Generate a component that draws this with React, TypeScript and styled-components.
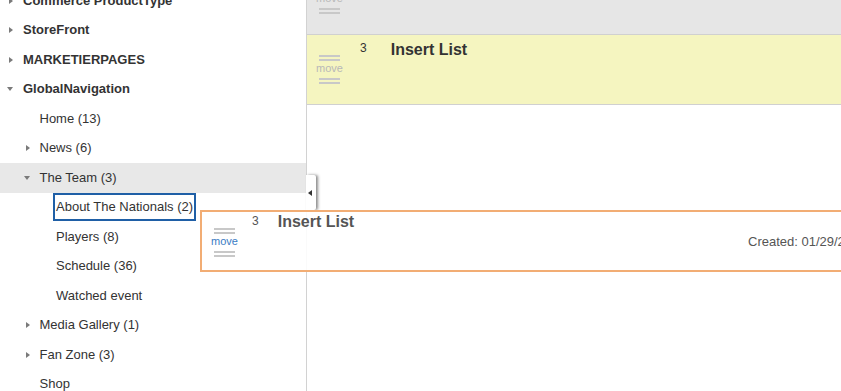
import styled, { createGlobalStyle } from 'styled-components'

const GlobalStyle = createGlobalStyle`
  html, body {
    margin: 0;
    padding: 0;
    background: #fff;
    overflow: hidden;
  }
  body {
    font-family: "Liberation Sans", Arial, sans-serif;
    color: #333;
  }
`

const Page = styled.div`
  position: relative;
  width: 841px;
  height: 391px;
  display: flex;
  overflow: hidden;
`

const Sidebar = styled.div`
  width: 306px;
  flex: none;
  border-right: 1px solid #d2d2d2;
  overflow: hidden;
`

const Tree = styled.ul`
  list-style: none;
  margin: -14px 0 0;
  padding: 0;
`

const Node = styled.li<{ $level: number; $active?: boolean; $bold?: boolean }>`
  height: 29.5px;
  display: flex;
  align-items: center;
  padding-left: ${p => 5 + (p.$level - 1) * 16.5}px;
  background: ${p => (p.$active ? '#e8e8e8' : 'transparent')};
  font-size: 13px;
  font-weight: ${p => (p.$bold ? 700 : 400)};
  color: #333;
  white-space: nowrap;
`

const Toggle = styled.span<{ $open?: boolean; $empty?: boolean }>`
  width: 18px;
  flex: none;
  display: flex;
  align-items: center;
  justify-content: flex-start;
  padding-left: 2px;
  box-sizing: border-box;

  &::before {
    content: '';
    display: ${p => (p.$empty ? 'none' : 'block')};
    width: 0;
    height: 0;
    ${p =>
      p.$open
        ? `border-left: 3.5px solid transparent;
           border-right: 3.5px solid transparent;
           border-top: 4px solid #7a7a7a;
           margin-left: 0;`
        : `border-top: 3.5px solid transparent;
           border-bottom: 3.5px solid transparent;
           border-left: 4px solid #7a7a7a;
           margin-left: 2px;`}
  }
`

const Label = styled.span<{ $selected?: boolean }>`
  line-height: 24px;
  padding: 0 1px;
  margin-left: -3px;
  border: 2px solid ${p => (p.$selected ? '#1f5fa6' : 'transparent')};
`

const Main = styled.div`
  flex: 1;
  min-width: 0;
  overflow: hidden;
`

const ItemList = styled.div`
  margin-top: -35px;
`

const Item = styled.div<{ $tone: 'gray' | 'yellow' }>`
  height: 69px;
  display: flex;
  align-items: flex-start;
  padding-left: 12px;
  background: ${p => (p.$tone === 'yellow' ? '#f5f5c0' : '#e6e6e6')};
  border-bottom: 1px solid #d0d0d0;
`

const Handle = styled.div<{ $top: number; $link?: boolean }>`
  width: 21px;
  flex: none;
  margin-top: ${p => p.$top}px;
  display: flex;
  flex-direction: column;
  align-items: center;
  color: ${p => (p.$link ? '#3a7cc4' : '#b8b8b8')};
  font-size: 11px;
`

const Bars = styled.div`
  width: 21px;
  display: flex;
  flex-direction: column;
  gap: 2px;

  & > i {
    display: block;
    height: 2px;
    background: #c8c8c8;
  }
`

const MoveText = styled.span`
  line-height: 15px;
  margin: 0 0 2px;
`

const Num = styled.span<{ $gap: number; $top: number }>`
  margin-left: ${p => p.$gap}px;
  margin-top: ${p => p.$top}px;
  font-size: 12px;
  line-height: 14px;
  color: #333;
`

const Title = styled.span<{ $gap: number; $top: number }>`
  margin-left: ${p => p.$gap}px;
  margin-top: ${p => p.$top}px;
  font-size: 16px;
  line-height: 20px;
  font-weight: 700;
  color: #333;
`

const DragCard = styled.div`
  position: absolute;
  left: 200px;
  top: 210px;
  width: 760px;
  height: 58px;
  display: flex;
  align-items: flex-start;
  padding-left: 12px;
  background: rgba(255, 255, 255, 0.88);
  border: 2px solid #f2ad74;
  z-index: 3;
`

const CardBody = styled.div`
  display: flex;
  flex-direction: column;
  flex: 1;
`

const CardHead = styled.div`
  display: flex;
  align-items: flex-start;

  & > ${Title} {
    color: #555;
  }
  & > ${Num} {
    color: #555;
  }
`

const Meta = styled.div`
  margin: 2px 0 0 513px;
  font-size: 13px;
  line-height: 15px;
  color: #555;
  white-space: nowrap;
`

const CollapseTab = styled.div`
  position: absolute;
  left: 306px;
  top: 175px;
  width: 10px;
  height: 35px;
  background: #fff;
  border-radius: 0 2px 2px 0;
  box-shadow: 2px 0 3px rgba(0, 0, 0, 0.45);
  display: flex;
  align-items: center;
  justify-content: center;
  z-index: 2;

  &::before {
    content: '';
    display: block;
    border-top: 3.5px solid transparent;
    border-bottom: 3.5px solid transparent;
    border-right: 4px solid #333;
    margin-left: -2px;
  }
`

type TreeNode = {
  label: string
  level: number
  toggle?: 'open' | 'closed'
  bold?: boolean
  active?: boolean
  selected?: boolean
}

const nodes: TreeNode[] = [
  { label: 'Commerce ProductType', level: 1, toggle: 'closed', bold: true },
  { label: 'StoreFront', level: 1, toggle: 'closed', bold: true },
  { label: 'MARKETIERPAGES', level: 1, toggle: 'closed', bold: true },
  { label: 'GlobalNavigation', level: 1, toggle: 'open', bold: true },
  { label: 'Home (13)', level: 2 },
  { label: 'News (6)', level: 2, toggle: 'closed' },
  { label: 'The Team (3)', level: 2, toggle: 'open', active: true },
  { label: 'About The Nationals (2)', level: 3, selected: true },
  { label: 'Players (8)', level: 3 },
  { label: 'Schedule (36)', level: 3 },
  { label: 'Watched event', level: 3 },
  { label: 'Media Gallery (1)', level: 2, toggle: 'closed' },
  { label: 'Fan Zone (3)', level: 2, toggle: 'closed' },
  { label: 'Shop', level: 2 },
]

const MoveHandle = ({ top, link }: { top: number; link?: boolean }) => (
  <Handle $top={top} $link={link}>
    <Bars>
      <i />
      <i />
    </Bars>
    <MoveText>move</MoveText>
    <Bars>
      <i />
      <i />
    </Bars>
  </Handle>
)

const App = () => {
  return (
    <Page>
      <GlobalStyle />
      <Sidebar>
        <Tree>
          {nodes.map(n => (
            <Node key={n.label} $level={n.level} $active={n.active} $bold={n.bold}>
              <Toggle $open={n.toggle === 'open'} $empty={!n.toggle} />
              <Label $selected={n.selected}>{n.label}</Label>
            </Node>
          ))}
        </Tree>
      </Sidebar>
      <CollapseTab />
      <Main>
        <ItemList>
          <Item $tone="gray">
            <MoveHandle top={20} />
          </Item>
          <Item $tone="yellow">
            <MoveHandle top={20} />
            <Num $gap={20} $top={6}>3</Num>
            <Title $gap={24} $top={5}>Insert List</Title>
          </Item>
        </ItemList>
      </Main>
      <DragCard>
        <MoveHandle top={16} link />
        <CardBody>
          <CardHead>
            <Num $gap={17} $top={2}>3</Num>
            <Title $gap={19} $top={0}>Insert List</Title>
          </CardHead>
          <Meta>Created: 01/29/2017 10:42 AM</Meta>
        </CardBody>
      </DragCard>
    </Page>
  )
}

export default App
